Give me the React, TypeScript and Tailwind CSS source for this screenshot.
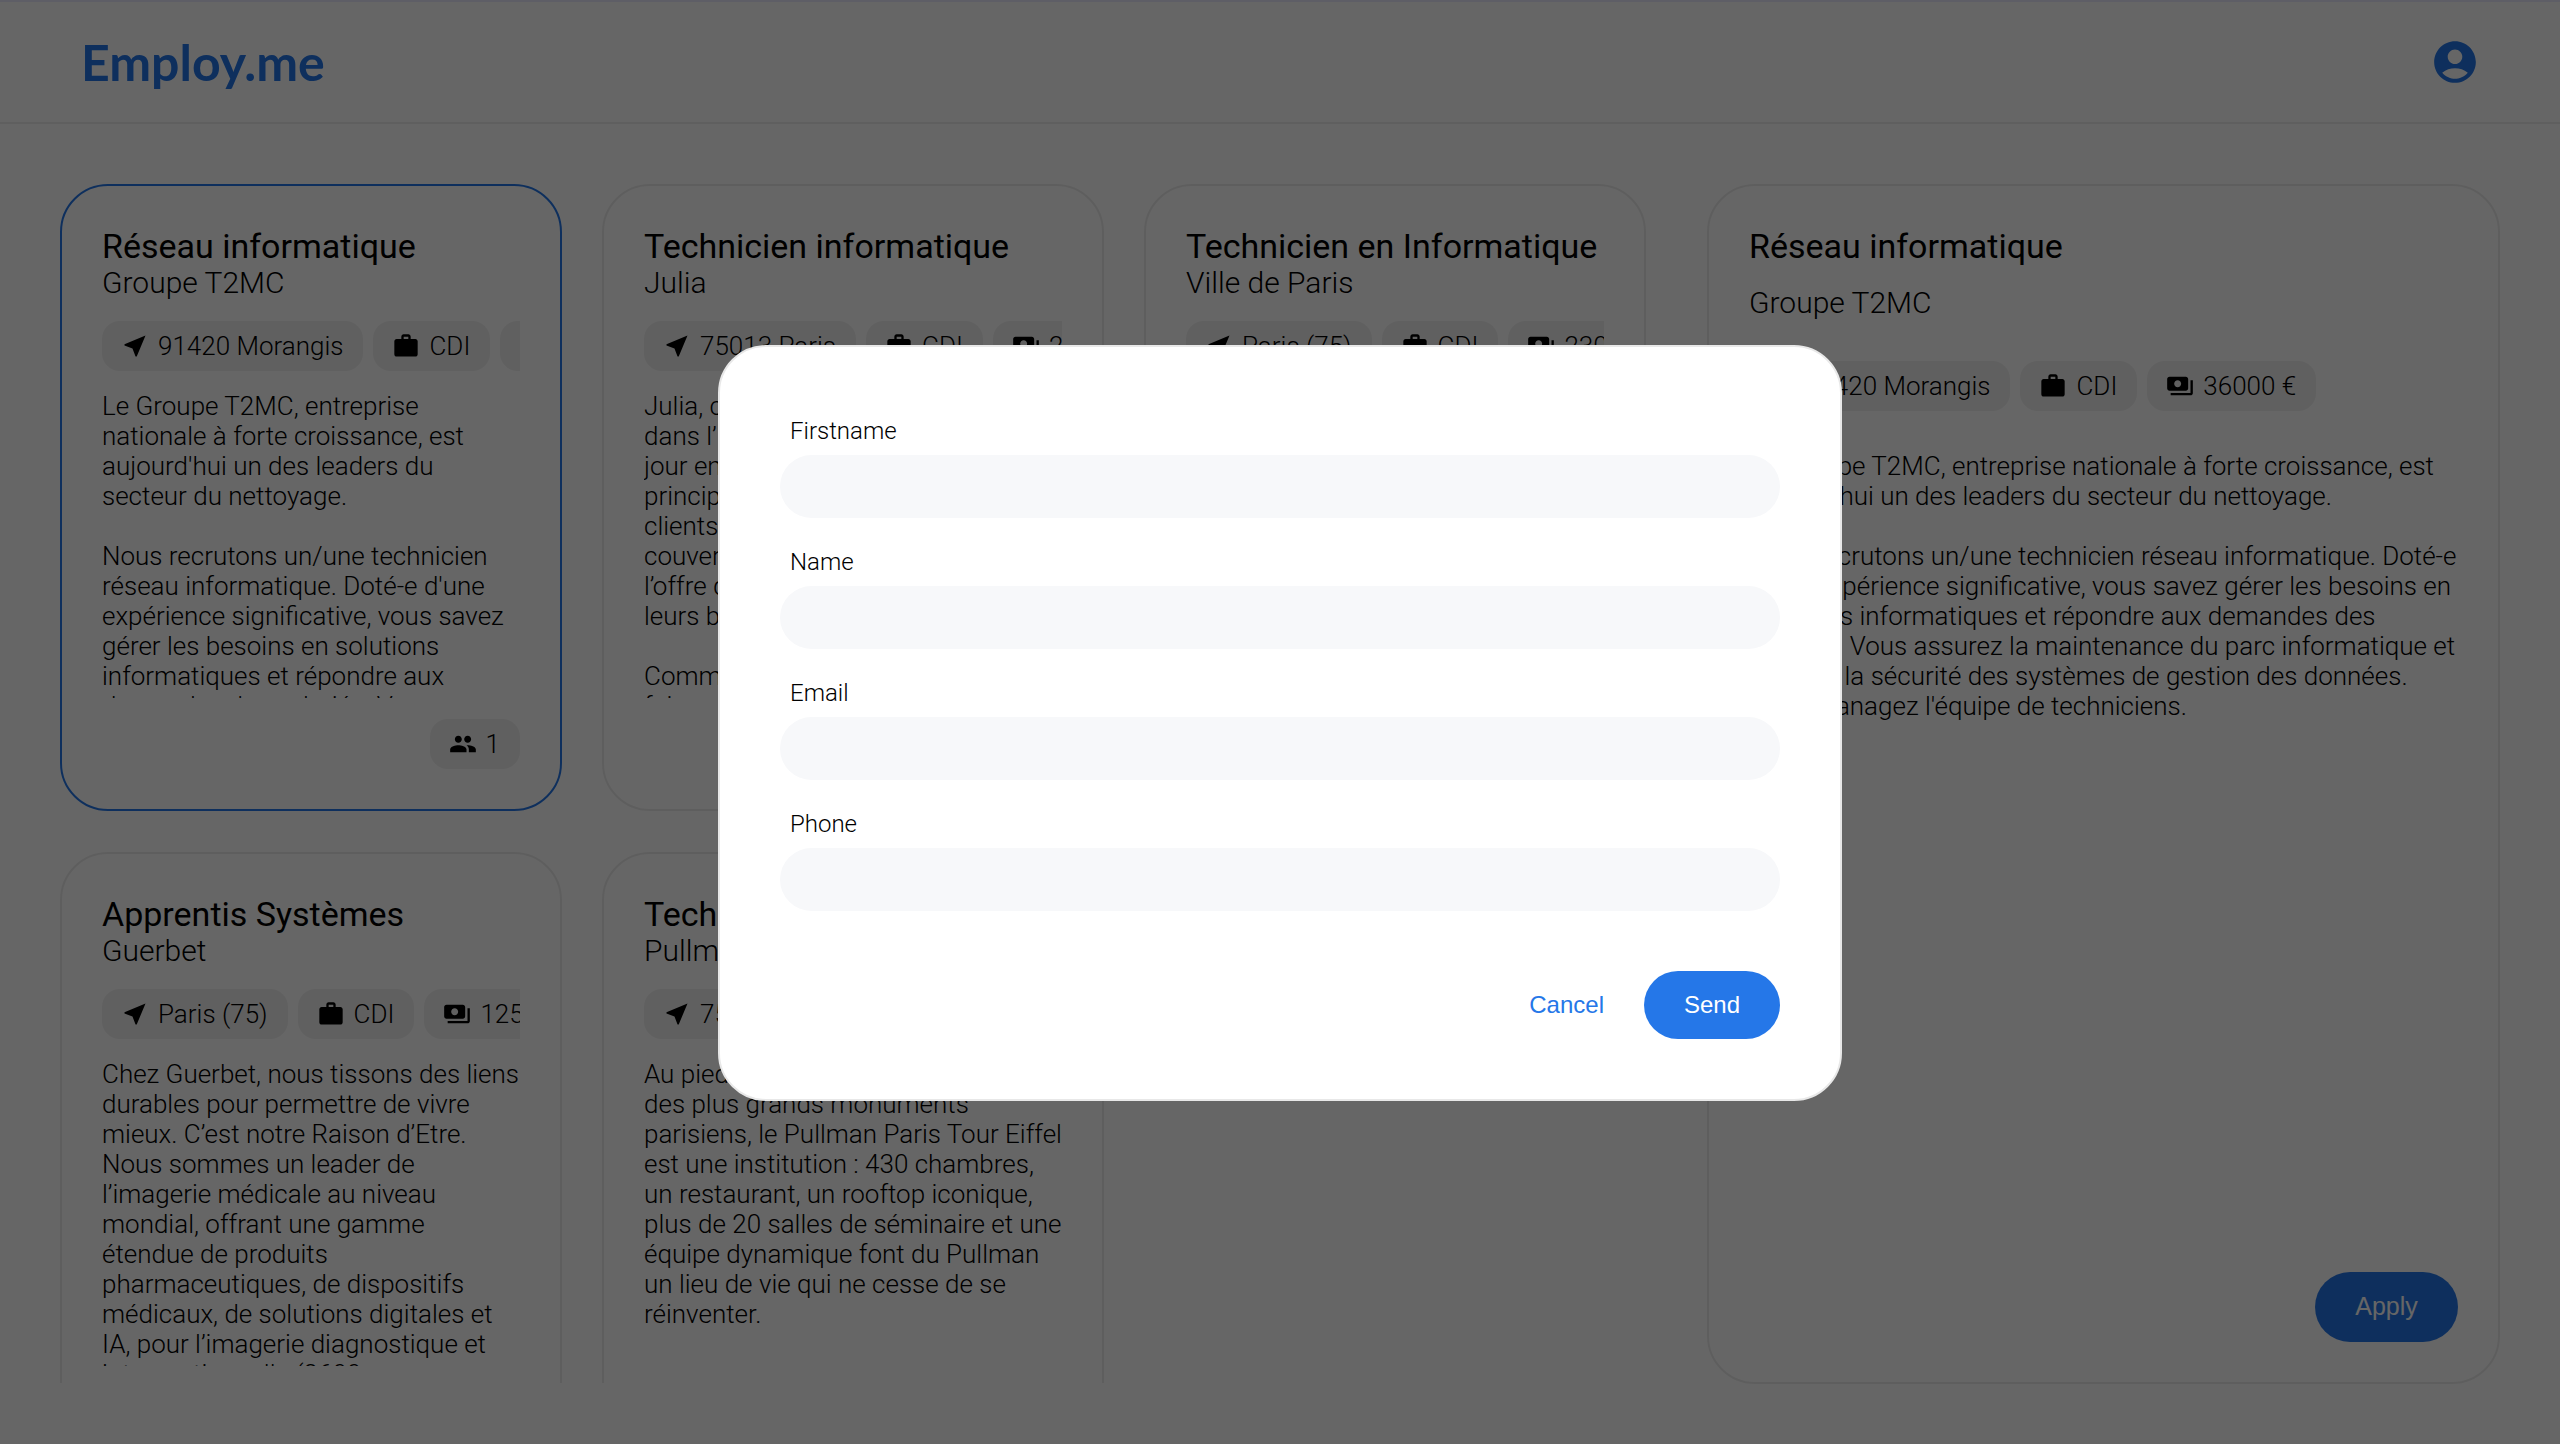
import type { ReactNode } from 'react';
import { MdAccountCircle, MdNearMe, MdPayments, MdPeople, MdWork } from 'react-icons/md';

const ROBOTO = 'font-[Roboto,sans-serif]';

interface Job {
  title: string;
  company: string;
  place: string;
  salary: string;
  text: string;
  applicants?: number;
  selected?: boolean;
}

const T2MC_TEXT =
  "Le Groupe T2MC, entreprise nationale à forte croissance, est aujourd'hui un des leaders du secteur du nettoyage.\n\nNous recrutons un/une technicien réseau informatique. Doté-e d'une expérience significative, vous savez gérer les besoins en solutions informatiques et répondre aux demandes des salariés. Vous assurez la maintenance du parc informatique et assurez la sécurité des systèmes de gestion des données.\nVous managez l'équipe de techniciens.";

const JOBS: Job[] = [
  {
    title: 'Réseau informatique',
    company: 'Groupe T2MC',
    place: '91420 Morangis',
    salary: '36000 €',
    text: T2MC_TEXT,
    applicants: 1,
    selected: true,
  },
  {
    title: 'Technicien informatique',
    company: 'Julia',
    place: '75013 Paris',
    salary: '28000 €',
    text: "Julia, c'est une société présente\ndans l’univers du numérique, de\njour en jour, dont la mission\nprincipale est d'accompagner ses\nclients dans leur transition et la\ncouverture de leurs besoins, par\nl’offre de services adaptée à\nleurs besoins.\n\nComment nous rejoindre ?\nfaire part de votre candidature.",
  },
  {
    title: 'Technicien en Informatique',
    company: 'Ville de Paris',
    place: 'Paris (75)',
    salary: '23000 €',
    text: 'La Ville de Paris recrute un technicien en informatique pour ses services.',
  },
  {
    title: 'Apprentis Systèmes',
    company: 'Guerbet',
    place: 'Paris (75)',
    salary: '12500 €',
    text: 'Chez Guerbet, nous tissons des liens durables pour permettre de vivre mieux. C’est notre Raison d’Etre. Nous sommes un leader de l’imagerie médicale au niveau mondial, offrant une gamme étendue de produits pharmaceutiques, de dispositifs médicaux, de solutions digitales et IA, pour l’imagerie diagnostique et interventionnelle (2600 collaborateurs).',
  },
  {
    title: 'Technicien informatique',
    company: 'Pullman',
    place: '75007 Paris',
    salary: '30000 €',
    text: 'Au pied de la Tour Eiffel, à deux pas des plus grands monuments parisiens, le Pullman Paris Tour Eiffel est une institution : 430 chambres, un restaurant, un rooftop iconique, plus de 20 salles de séminaire et une équipe dynamique font du Pullman un lieu de vie qui ne cesse de se réinventer.',
  },
];

function Chip({ icon, children }: { icon: ReactNode; children: ReactNode }) {
  return (
    <span className="flex h-[50px] shrink-0 items-center gap-[9px] rounded-[18px] bg-[#f0f0f0] pl-[19px] pr-[20px] text-[26px] font-light leading-[30px] whitespace-nowrap">
      {icon}
      {children}
    </span>
  );
}

function JobChips({ job }: { job: Job }) {
  return (
    <>
      <Chip icon={<MdNearMe size={28} />}>{job.place}</Chip>
      <Chip icon={<MdWork size={28} />}>CDI</Chip>
      <Chip icon={<MdPayments size={28} />}>{job.salary}</Chip>
    </>
  );
}

function JobCard({ job }: { job: Job }) {
  const border = job.selected ? 'border-[#2577e8]' : 'border-[#ececec]';
  return (
    <div className={`flex h-[627px] flex-col rounded-[48px] border-2 p-[40px] ${border}`}>
      <h2 className="text-[34px] leading-[41px] font-normal whitespace-nowrap">{job.title}</h2>
      <p className="text-[30px] leading-[32px] font-light">{job.company}</p>
      <div className="mt-[22px] flex gap-[10px] overflow-hidden">
        <JobChips job={job} />
      </div>
      <p className="mt-[20px] h-[307px] overflow-hidden text-[26px] leading-[30px] font-light whitespace-pre-line">
        {job.text}
      </p>
      {job.applicants !== undefined && (
        <div className="mt-auto flex justify-end">
          <Chip icon={<MdPeople size={28} />}>{job.applicants}</Chip>
        </div>
      )}
    </div>
  );
}

function ApplyField({ label }: { label: string }) {
  return (
    <label className="block">
      <span className="flex h-[48px] items-center pl-[10px] text-[24px] font-light">{label}</span>
      <input className="block h-[63px] w-full rounded-full bg-[#f7f8fa] px-[24px] outline-none" />
    </label>
  );
}

export default function App() {
  const current = JOBS[0];

  return (
    <div className={`relative h-[1444px] overflow-hidden bg-white text-black ${ROBOTO}`}>
      <header className="flex h-[124px] items-center justify-between border-t-2 border-b-2 border-t-[#ececff] border-b-[#eeeeee] pl-[81px] pr-[80px]">
        <span className="font-[Lato,sans-serif] text-[50px] leading-none font-bold text-[#2577e8]">Employ.me</span>
        <MdAccountCircle size={50} className="text-[#2577e8]" />
      </header>

      <main className="flex items-start gap-[61px] pt-[60px] pl-[60px]">
        <div className="h-[1199px] overflow-hidden">
          <div className="grid w-[1586px] grid-cols-3 gap-x-[40px] gap-y-[41px]">
            {JOBS.map((job) => (
              <JobCard key={job.title + job.company} job={job} />
            ))}
          </div>
        </div>

        <section className="flex h-[1200px] w-[793px] flex-col rounded-[48px] border-2 border-[#ececec] p-[40px]">
          <h2 className="text-[34px] leading-[41px] font-normal">{current.title}</h2>
          <p className="mt-[21px] text-[30px] leading-[30px] font-light">{current.company}</p>
          <div className="mt-[43px] flex gap-[10px]">
            <JobChips job={current} />
          </div>
          <p className="mt-[40px] text-[26px] leading-[30px] font-light whitespace-pre-line">{current.text}</p>
          <div className="mt-auto flex justify-end">
            <button className="h-[70px] w-[143px] rounded-full bg-[#2577e8] font-['Liberation_Sans',sans-serif] text-[25px] text-white">
              Apply
            </button>
          </div>
        </section>
      </main>

      {/* Dialog over the dimmed page */}
      <div className="absolute inset-0 flex items-center justify-center bg-black/60">
        <div className="mt-[2px] w-[1124px] rounded-[48px] border-2 border-[#e8e8e8] bg-white p-[60px]">
          <div className="flex flex-col gap-[20px]">
            <ApplyField label="Firstname" />
            <ApplyField label="Name" />
            <ApplyField label="Email" />
            <ApplyField label="Phone" />
          </div>
          <div className="mt-[60px] flex items-center justify-end gap-[40px] font-['Liberation_Sans',sans-serif] text-[24px]">
            <button className="text-[#2577e8]">Cancel</button>
            <button className="h-[68px] w-[136px] rounded-full bg-[#2577e8] text-white">Send</button>
          </div>
        </div>
      </div>
    </div>
  );
}
